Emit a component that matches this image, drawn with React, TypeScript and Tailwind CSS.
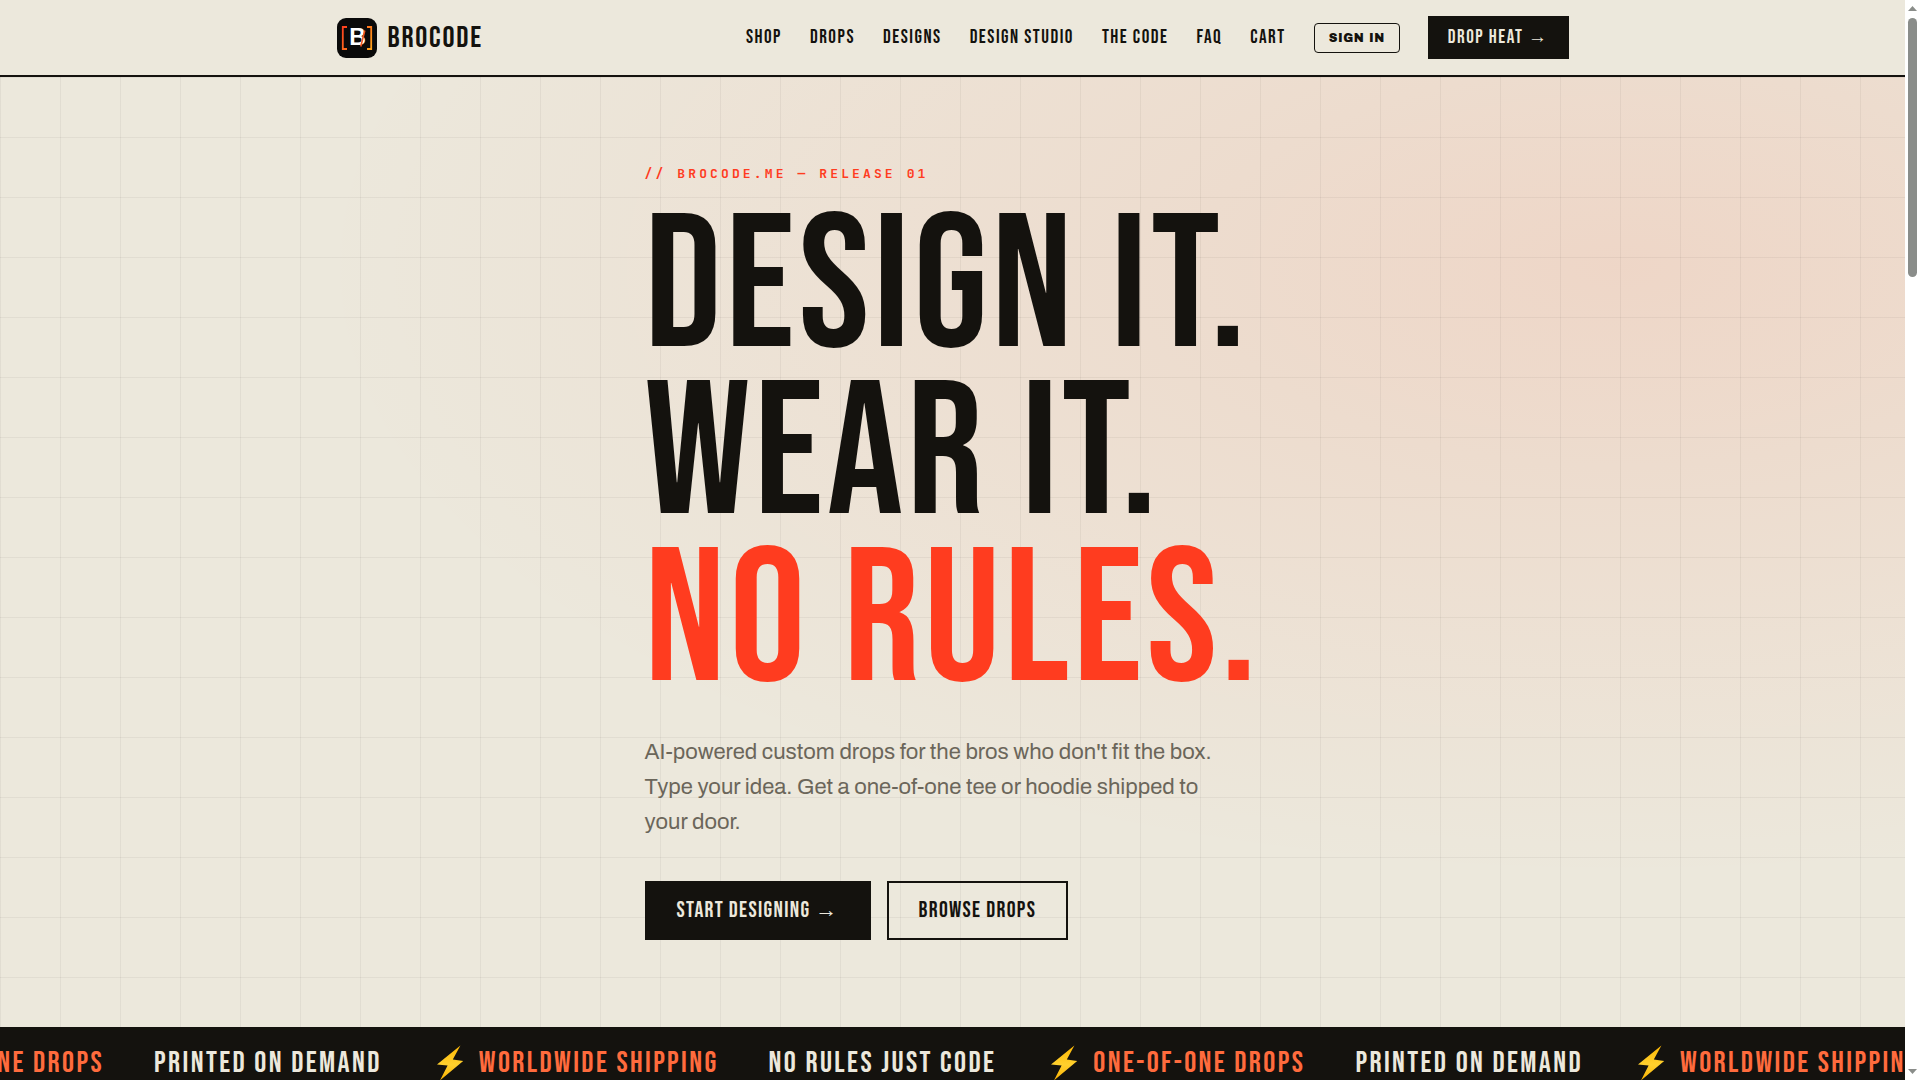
const navLinks = ["Shop", "Drops", "Designs", "Design Studio", "The Code", "FAQ", "Cart"];

const tickerItems = [
  { text: "One-of-one drops", hot: true },
  { text: "Printed on demand", hot: false },
  { text: "Worldwide shipping", hot: true },
  { text: "No rules just code", hot: false },
  { text: "One-of-one drops", hot: true },
  { text: "Printed on demand", hot: false },
  { text: "Worldwide shipping", hot: true },
];

function LogoMark() {
  return (
    <svg viewBox="0 0 40 40" className="size-10" aria-hidden="true">
      <defs>
        <linearGradient id="bracket" gradientUnits="userSpaceOnUse" x1="5" y1="8" x2="35" y2="32">
          <stop offset="0" stopColor="#ff3d1f" />
          <stop offset="1" stopColor="#ffa61a" />
        </linearGradient>
      </defs>
      <rect width="40" height="40" rx="9" fill="#0a0a0a" />
      <path
        d="M10 9H5.8V31H10M30 9H34.2V31H30"
        fill="none"
        stroke="url(#bracket)"
        strokeWidth="1.8"
      />
      <text
        x="20.5"
        y="27"
        textAnchor="middle"
        fontSize="23"
        className="fill-white font-['Liberation_Sans',Arial,sans-serif] font-bold tracking-normal"
      >
        B
      </text>
      <path d="M27.8 12.5L23.8 28.5" stroke="#f2551f" strokeWidth="1.6" />
    </svg>
  );
}

function Bolt() {
  return (
    <svg viewBox="-4 0 36 36" className="size-9" aria-hidden="true">
      <defs>
        <linearGradient id="bolt" x1="0" y1="0" x2="0" y2="1">
          <stop offset="0" stopColor="#feb804" />
          <stop offset="0.55" stopColor="#ffd02e" />
          <stop offset="1" stopColor="#fcb100" />
        </linearGradient>
      </defs>
      <path d="M24.4 0.6L1 19.6L11.6 20.6L4 35.4L27.2 16L16.8 14.6Z" fill="url(#bolt)" />
    </svg>
  );
}

function Scrollbar() {
  return (
    <div className="flex h-screen w-[15px] shrink-0 flex-col items-center justify-between bg-white py-1.5" aria-hidden="true">
      <div className="flex flex-col items-center gap-[7px]">
        <svg viewBox="0 0 9 5" className="h-[5px] w-[9px]">
          <path d="M0 5L4.5 0L9 5Z" fill="#8a8d8a" />
        </svg>
        <div className="h-[259px] w-[9px] rounded-full bg-[#8a8d8a]" />
      </div>
      <svg viewBox="0 0 9 5" className="h-[5px] w-[9px]">
        <path d="M0 0L4.5 5L9 0Z" fill="#8a8d8a" />
      </svg>
    </div>
  );
}

function Header() {
  return (
    <header className="border-b-2 border-[#14120e] bg-[#ece8dc]">
      <div className="mx-auto flex max-w-[1280px] items-center justify-between px-6 py-4">
        <a href="#" className="flex items-center gap-[11px]">
          <LogoMark />
          <span className="text-[30px] leading-none tracking-[0.06em]">BROCODE</span>
        </a>
        <nav className="flex items-center gap-7 text-[19px] leading-none tracking-[0.08em] uppercase">
          {navLinks.map((link) => (
            <a key={link} href="#">
              {link}
            </a>
          ))}
          <button className="rounded-sm border border-[#14120e] px-3.5 py-1.5 font-['Archivo_Black','Archivo','Liberation_Sans',sans-serif] text-xs tracking-[0.05em] uppercase">
            Sign in
          </button>
          <a href="#" className="bg-[#14120e] px-5 py-[11px] leading-[21px] text-[#ece8dc]">
            Drop heat →
          </a>
        </nav>
      </div>
    </header>
  );
}

function Hero() {
  return (
    <section className="flex min-h-[88vh] items-center justify-center bg-[#ece8dc] bg-[linear-gradient(rgba(20,18,14,0.05)_1px,transparent_1px),linear-gradient(90deg,rgba(20,18,14,0.05)_1px,transparent_1px),radial-gradient(ellipse_at_85%_20%,rgba(255,70,31,0.11),transparent_57%)] bg-[size:60px_60px,60px_60px,100%_100%]">
      <div>
        <p className="mb-[22px] font-['JetBrains_Mono','Liberation_Mono',monospace] text-[13px] leading-5 font-bold tracking-[0.24em] text-[#ff3c1f] uppercase">
          // Brocode.me — Release 01
        </p>
        <h1 className="text-[190px] leading-[167px] tracking-[0.02em]">
          DESIGN IT.
          <br />
          WEAR IT.
          <br />
          <span className="text-[#ff3c1f]">NO RULES.</span>
        </h1>
        <p className="mt-7 max-w-[600px] font-['Archivo','Liberation_Sans',Arial,sans-serif] text-[22px] leading-[35px] text-[#6b665a]">
          AI-powered custom drops for the bros who don't fit the box. Type your idea. Get a one-of-one tee or hoodie
          shipped to your door.
        </p>
        <div className="mt-[41px] flex gap-4 text-[22px] leading-[23px] tracking-[0.06em]">
          <a href="#" className="border-2 border-[#14120e] bg-[#14120e] px-[30px] py-4 text-[#ece8dc]">
            START DESIGNING →
          </a>
          <a href="#" className="border-2 border-[#14120e] px-[30px] py-4">
            BROWSE DROPS
          </a>
        </div>
      </div>
    </section>
  );
}

function Ticker() {
  return (
    <div className="overflow-hidden bg-[#14120e] py-4">
      <div className="-ml-[155px] flex items-center gap-[50px] text-[30px] leading-10 tracking-[0.08em] whitespace-nowrap uppercase">
        {tickerItems.map((item, i) => (
          <span key={i} className={item.hot ? "flex items-center gap-[11px] text-[#ff6b3d]" : "text-[#ece8dc]"}>
            {item.hot && <Bolt />}
            {item.text}
          </span>
        ))}
      </div>
    </div>
  );
}

export default function App() {
  return (
    <div className="flex h-screen overflow-hidden font-['Bebas_Neue','Liberation_Sans',sans-serif] text-[#14120e]">
      <div className="min-w-0 flex-1">
        <Header />
        <main>
          <Hero />
          <Ticker />
        </main>
      </div>
      <Scrollbar />
    </div>
  );
}
